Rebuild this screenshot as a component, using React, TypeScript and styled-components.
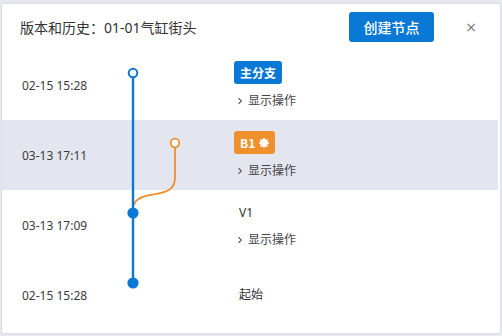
import React from "react";
import styled, { createGlobalStyle } from "styled-components";

const GlobalStyle = createGlobalStyle`
  html, body { margin: 0; padding: 0; background: #e5e8ee; }
  body { font-family: "Noto Sans", "Noto Sans CJK SC", sans-serif; }
  * { box-sizing: border-box; }
`;

const BLUE = "#0a79d6";
const ORANGE = "#f0902c";

const Card = styled.div`
  margin: 3px 1px 2px 1px;
  height: 331px;
  background: #fff;
  border: 1px solid #dcdfe6;
  border-radius: 3px;
  display: flex;
  flex-direction: column;
`;

const Header = styled.div`
  height: 46px;
  display: flex;
  align-items: center;
  padding: 0 21px 0 18px;
`;

const Title = styled.div`
  font-size: 14px;
  color: #333;
  flex: 1;
`;

const CreateButton = styled.button`
  width: 85px;
  height: 30px;
  border: none;
  border-radius: 3px;
  background: ${BLUE};
  color: #fff;
  font-family: "Noto Sans CJK SC", sans-serif;
  font-size: 14px;
  font-weight: 500;
  padding: 0;
  margin-top: -1px;
`;

const CloseButton = styled.button`
  width: 16px;
  margin-left: 29px;
  border: none;
  background: none;
  padding: 0;
  color: #777;
  font-size: 14px;
  font-family: "DejaVu Sans", sans-serif;
`;

const Timeline = styled.div`
  position: relative;
  display: flex;
  flex-direction: column;
`;

const Graph = styled.svg`
  position: absolute;
  left: 0;
  top: 0;
  pointer-events: none;
`;

const Row = styled.div<{ $active?: boolean }>`
  height: 70px;
  margin-right: 2px;
  display: grid;
  grid-template-columns: 212px 1fr;
  align-items: center;
  padding-left: 20px;
  background: ${(p) => (p.$active ? "#e3e6ee" : "transparent")};
`;

const DateText = styled.div`
  font-size: 12px;
  color: #3c3c3c;
`;

const LabelCol = styled.div`
  display: flex;
  flex-direction: column;
  align-items: flex-start;
  gap: 9px;
`;

const Badge = styled.span<{ $color: string }>`
  height: 23px;
  display: inline-flex;
  align-items: center;
  gap: 4px;
  padding: 0 6px;
  border-radius: 3px;
  background: ${(p) => p.$color};
  color: #fff;
  font-size: 12px;
  font-weight: 600;
  font-family: "Noto Sans CJK SC", sans-serif;
`;

const PlainLabel = styled.span`
  padding-left: 5px;
  font-size: 12px;
  color: #333;
  line-height: 20px;
`;

const Action = styled.div`
  display: flex;
  align-items: center;
  gap: 5px;
  padding-left: 3px;
  font-size: 12px;
  color: #444;
  line-height: 16px;
`;

const Chevron = () => (
  <svg width="6" height="8" viewBox="0 0 6 8">
    <path d="M1.5 1.2 L4.3 4 L1.5 6.8" fill="none" stroke="#555" strokeWidth="1.1" />
  </svg>
);

const Asterisk = () => (
  <svg width="10" height="10" viewBox="0 0 10 10">
    <g stroke="#fff" strokeWidth="2.4" strokeLinecap="round">
      <line x1="5" y1="1.3" x2="5" y2="8.7" />
      <line x1="1.3" y1="5" x2="8.7" y2="5" />
      <line x1="2.4" y1="2.4" x2="7.6" y2="7.6" />
      <line x1="7.6" y1="2.4" x2="2.4" y2="7.6" />
    </g>
  </svg>
);

const ShowActions = () => (
  <Action>
    <Chevron />
    <span>显示操作</span>
  </Action>
);

export default function App() {
  return (
    <>
      <GlobalStyle />
      <Card>
        <Header>
          <Title>版本和历史：01-01气缸街头</Title>
          <CreateButton>创建节点</CreateButton>
          <CloseButton>×</CloseButton>
        </Header>
        <Timeline>
          <Row>
            <DateText>02-15 15:28</DateText>
            <LabelCol>
              <Badge $color={BLUE}>主分支</Badge>
              <ShowActions />
            </LabelCol>
          </Row>
          <Row $active>
            <DateText>03-13 17:11</DateText>
            <LabelCol>
              <Badge $color={ORANGE}>
                B1 <Asterisk />
              </Badge>
              <ShowActions />
            </LabelCol>
          </Row>
          <Row>
            <DateText>03-13 17:09</DateText>
            <LabelCol>
              <PlainLabel>V1</PlainLabel>
              <ShowActions />
            </LabelCol>
          </Row>
          <Row>
            <DateText>02-15 15:28</DateText>
            <LabelCol>
              <PlainLabel>起始</PlainLabel>
            </LabelCol>
          </Row>
          <Graph width="220" height="280" viewBox="0 0 220 280">
            <path
              d="M173 97.5 V128 C173 142 160 143 148 145 C138 147 132 150 131 158"
              fill="none"
              stroke={ORANGE}
              strokeWidth="1.8"
            />
            <line x1="131" y1="27.5" x2="131" y2="233" stroke={BLUE} strokeWidth="2.4" />
            <circle cx="131" cy="23" r="4.3" fill="#fff" stroke={BLUE} strokeWidth="2" />
            <circle cx="173" cy="93" r="4.3" fill="#fff" stroke={ORANGE} strokeWidth="1.8" />
            <circle cx="131" cy="163" r="5.6" fill={BLUE} />
            <circle cx="131" cy="233" r="5.6" fill={BLUE} />
          </Graph>
        </Timeline>
      </Card>
    </>
  );
}
